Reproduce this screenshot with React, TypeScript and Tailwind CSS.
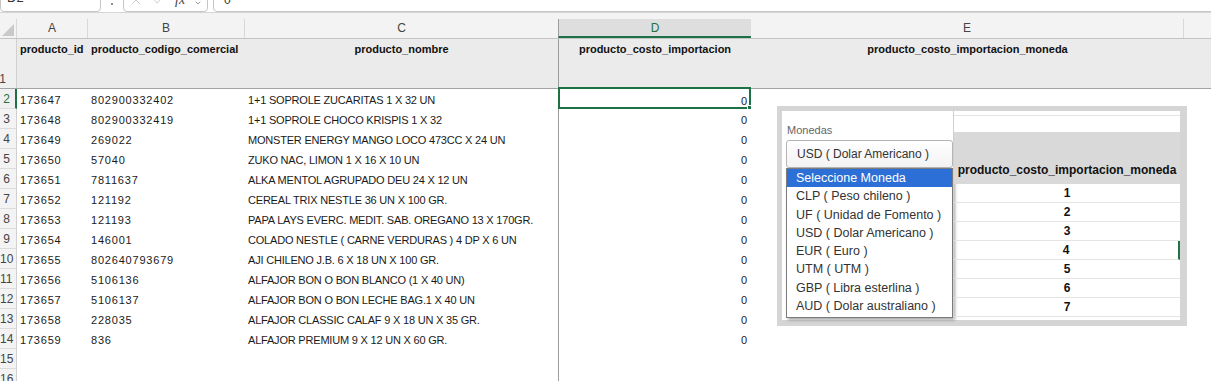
import { Check, ChevronDown, X } from "lucide-react";

const rows = [
  ["173647", "802900332402", "1+1 SOPROLE ZUCARITAS 1 X 32 UN"],
  ["173648", "802900332419", "1+1 SOPROLE CHOCO KRISPIS 1 X 32"],
  ["173649", "269022", "MONSTER ENERGY MANGO LOCO 473CC X 24 UN"],
  ["173650", "57040", "ZUKO NAC, LIMON 1 X 16 X 10 UN"],
  ["173651", "7811637", "ALKA MENTOL AGRUPADO DEU 24 X 12 UN"],
  ["173652", "121192", "CEREAL TRIX NESTLE 36 UN X 100 GR."],
  ["173653", "121193", "PAPA LAYS EVERC. MEDIT. SAB. OREGANO 13 X 170GR."],
  ["173654", "146001", "COLADO NESTLE ( CARNE VERDURAS ) 4 DP X 6 UN"],
  ["173655", "802640793679", "AJI CHILENO J.B. 6 X 18 UN X 100 GR."],
  ["173656", "5106136", "ALFAJOR BON O BON BLANCO (1 X 40 UN)"],
  ["173657", "5106137", "ALFAJOR BON O BON LECHE BAG.1 X 40 UN"],
  ["173658", "228035", "ALFAJOR CLASSIC CALAF 9 X 18 UN X 35 GR."],
  ["173659", "836", "ALFAJOR PREMIUM 9 X 12 UN X 60 GR."],
];

const monedas = [
  "Seleccione Moneda",
  "CLP ( Peso chileno )",
  "UF ( Unidad de Fomento )",
  "USD ( Dolar Americano )",
  "EUR ( Euro )",
  "UTM ( UTM )",
  "GBP ( Libra esterlina )",
  "AUD ( Dolar australiano )",
];

const FormulaBar = () => {
  return (
    <div className="flex h-[12px] items-end overflow-hidden bg-white text-[#333]">
      {/* name box */}
      <div className="flex h-[30px] w-[101px] shrink-0 items-end justify-between rounded-[4px] border border-[#c6c6c6] pb-[6px] pl-[6px] pr-[4px]">
        <span className="text-[13px] leading-[15px]">D2</span>
        <ChevronDown size={12} className="mb-[1px] text-[#555]" />
      </div>
      <div className="mb-[7px] ml-[10px] h-[2px] w-[2px] rounded-full bg-[#666]" />
      {/* cancel / enter / fx */}
      <div className="ml-[10px] flex h-[30px] w-[85px] shrink-0 items-end gap-[9px] rounded-[4px] border border-[#c6c6c6] pb-[4px] pl-[5px]">
        <X size={14} strokeWidth={1.3} className="text-[#bdbdbd]" />
        <Check size={14} strokeWidth={1.3} className="text-[#bdbdbd]" />
        <span className="font-['Liberation_Serif',serif] text-[14px] italic leading-[14px] text-[#444]">fx</span>
        <ChevronDown size={8} className="text-[#666]" />
      </div>
      {/* formula input */}
      <div className="ml-[5px] mr-[-6px] flex h-[30px] flex-1 items-end rounded-[4px] border border-[#c6c6c6] pb-[4px] pl-[10px]">
        <span className="text-[12px] leading-[14px]">0</span>
      </div>
    </div>
  );
};

const ColumnHeaders = () => {
  return (
    <div className="flex h-[20px] border-b border-[#c4c4c4] bg-[#f3f3f3] text-[12px] leading-[19px] text-[#444]">
      <div className="relative w-[17px] shrink-0 border-r border-[#d8d8d8]">
        <div className="absolute bottom-[2px] right-[2px] h-0 w-0 border-b-[12px] border-l-[12px] border-b-[#c9c9c9] border-l-transparent" />
      </div>
      <div className="w-[71px] shrink-0 border-r border-[#d8d8d8] text-center">A</div>
      <div className="w-[157px] shrink-0 border-r border-[#d8d8d8] text-center">B</div>
      <div className="w-[313px] shrink-0 text-center">C</div>
      <div className="w-[193px] shrink-0 border-b-2 border-l border-b-[#1e7145] border-l-[#9d9d9d] bg-[#dedede] text-center text-[#1e7145]">
        D
      </div>
      <div className="w-[433px] shrink-0 border-r border-[#d8d8d8] text-center">E</div>
      <div className="flex-1" />
    </div>
  );
};

const HeaderRow = () => {
  return (
    <div className="flex h-[50px] border-b border-[#a3a3a3] bg-[#ebebeb] text-[11px] font-bold leading-[14px] text-[#111]">
      <div className="flex w-[17px] shrink-0 items-end justify-end border-r border-[#d0d0d0] bg-[#f0f0f0] pb-[2px] pr-[10px] text-[12px] font-normal text-[#444]">
        1
      </div>
      <div className="w-[71px] shrink-0 pl-[3px] pt-[3px]">producto_id</div>
      <div className="w-[157px] shrink-0 pl-[3px] pt-[3px]">producto_codigo_comercial</div>
      <div className="w-[313px] shrink-0 pt-[3px] text-center">producto_nombre</div>
      <div className="w-[193px] shrink-0 border-l border-[#9d9d9d] pt-[3px] text-center">
        producto_costo_importacion
      </div>
      <div className="w-[433px] shrink-0 pt-[3px] text-center">producto_costo_importacion_moneda</div>
      <div className="flex-1" />
    </div>
  );
};

const DataRow = ({ n, cells }: { n: number; cells?: string[] }) => {
  const active = n === 2;
  return (
    <div className="flex h-[20px] text-[11px] leading-[22px] text-[#1a1a1a]">
      <div
        className={
          active
            ? "w-[17px] shrink-0 border-b border-r-2 border-b-[#dcdcdc] border-r-[#1e7145] bg-[#f0f0f0] pr-[5px] text-right text-[12px] leading-[20px] text-[#1e7145]"
            : "w-[17px] shrink-0 border-b border-r border-b-[#dcdcdc] border-r-[#d0d0d0] bg-[#f3f3f3] pr-[6px] text-right text-[12px] leading-[20px] text-[#444]"
        }
      >
        {n}
      </div>
      <div className="w-[71px] shrink-0 pl-[3px] tracking-[0.8px]">{cells?.[0]}</div>
      <div className="w-[157px] shrink-0 pl-[3px] tracking-[0.8px]">{cells?.[1]}</div>
      <div className="w-[313px] shrink-0 whitespace-nowrap pl-[3px] tracking-[-0.2px]">{cells?.[2]}</div>
      <div
        className={
          active
            ? "relative -mt-[2px] h-[22px] w-[193px] shrink-0 border-2 border-[#1e7145] pr-[1px] text-right leading-[24px] tracking-[0.8px]"
            : "w-[193px] shrink-0 border-l border-[#9d9d9d] pr-[3px] text-right tracking-[0.8px]"
        }
      >
        {cells ? "0" : ""}
        {active && (
          <div className="absolute -bottom-[3px] -right-[3px] h-[5px] w-[5px] border border-white bg-[#1e7145]" />
        )}
      </div>
      <div className="flex-1" />
    </div>
  );
};

const CurrencyPicture = () => {
  return (
    <div className="absolute left-[777px] top-[106px] flex h-[220px] w-[410px] bg-[#d5d5d5] pb-[6px] pl-[5px] pr-[7px] pt-[5px] font-['Liberation_Sans',Arial,sans-serif]">
      <div className="flex flex-1 bg-white">
        {/* select with open list */}
        <div className="w-[171px] shrink-0">
          <div className="pl-[5px] pt-[13px] text-[11px] leading-[12px] text-[#666]">Monedas</div>
          <div className="ml-[4px] mt-[4px] flex h-[28px] items-center rounded-[3px] border border-[#b5b5b5] bg-gradient-to-b from-white to-[#f3f3f3] pl-[10px] text-[12px] text-[#333]">
            USD ( Dolar Americano )
          </div>
          <div className="ml-[4px] border border-[#7b7b7b] bg-white pb-[2px] shadow-[2px_2px_3px_rgba(0,0,0,0.35)]">
            {monedas.map((m, i) => (
              <div
                key={m}
                className={
                  i === 0
                    ? "h-[18.25px] bg-[#2c6fd6] pl-[9px] text-[12.5px] leading-[18px] text-white"
                    : "h-[18.25px] pl-[9px] text-[12.5px] leading-[18px] text-[#333]"
                }
              >
                {m}
              </div>
            ))}
          </div>
        </div>
        {/* table */}
        <div className="flex-1 border-l border-[#d0d0d0]">
          <div className="h-[5px] border-b border-[#e2e2e2]" />
          <div className="h-[16px]" />
          <div className="flex h-[52px] items-end justify-center bg-[#d9d9d9] pb-[7px] text-[12px] font-bold leading-[14px] text-[#111]">
            producto_costo_importacion_moneda
          </div>
          {[1, 2, 3, 4, 5, 6, 7].map((v) => (
            <div
              key={v}
              className={
                v === 4
                  ? "h-[19px] border-b border-r-2 border-b-[#e4e4e4] border-r-[#217346] text-center text-[12px] font-bold leading-[19px] text-[#111]"
                  : "h-[19px] border-b border-[#e4e4e4] text-center text-[12px] font-bold leading-[19px] text-[#111]"
              }
            >
              {v}
            </div>
          ))}
        </div>
      </div>
    </div>
  );
}

export default function App() {
  return (
    <div className="relative h-[381px] w-[1211px] overflow-hidden bg-white font-['Liberation_Sans',Arial,sans-serif]">
      <FormulaBar />
      <div className="h-[7px] border-t border-[#d6d6d6] bg-[#f3f3f3]" />
      <ColumnHeaders />
      <HeaderRow />
      {rows.map((r, i) => (
        <DataRow key={i} n={i + 2} cells={r} />
      ))}
      <DataRow n={15} />
      <DataRow n={16} />
      <CurrencyPicture />
    </div>
  );
}
